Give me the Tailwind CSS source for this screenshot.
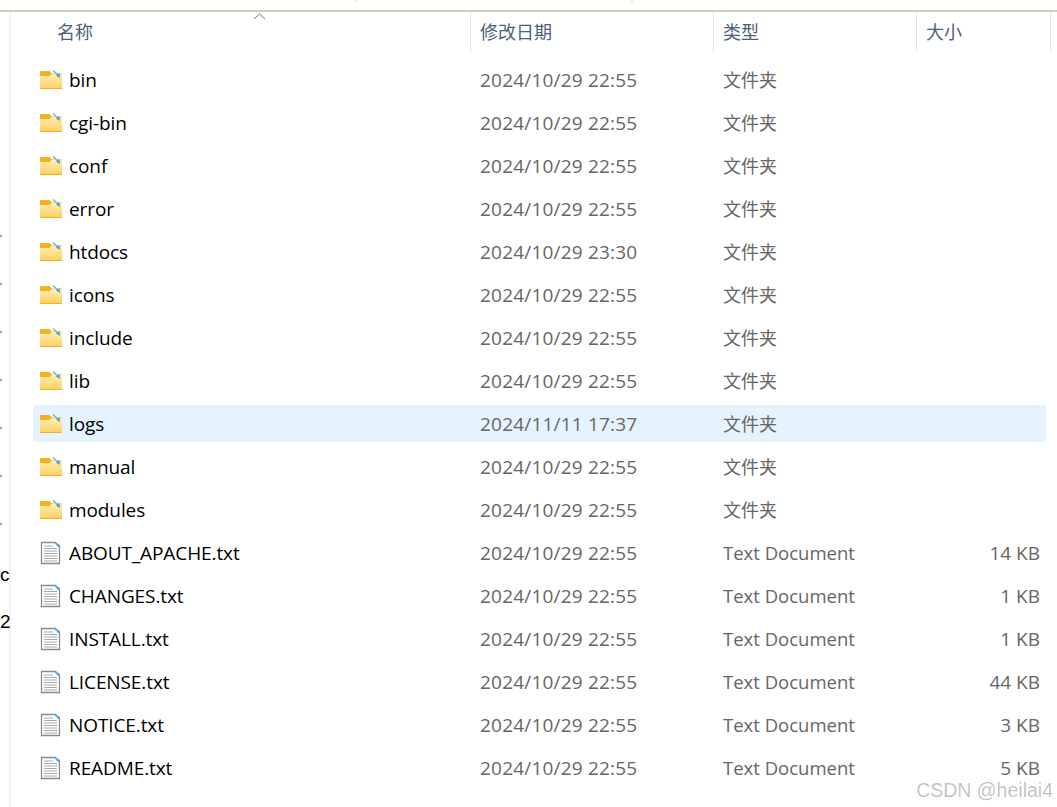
<!DOCTYPE html>
<html><head><meta charset="utf-8"><script src="https://cdn.jsdelivr.net/npm/@tailwindcss/browser@4"></script></head>
<body class="bg-white">
<div class="relative w-[1057px] h-[807px] overflow-hidden bg-white text-[19px] font-['Open_Sans','Noto_Sans_CJK_SC',sans-serif]">
<svg width="0" height="0" class="absolute">
<defs>
<linearGradient id="f" x1="0" y1="0" x2="0" y2="1"><stop offset="0" stop-color="#ffeeb4"/><stop offset="1" stop-color="#fdd164"/></linearGradient>
<symbol id="folder" viewBox="0 0 24 20"><path d="M1 2a1 1 0 0 1 1-1h8.500l2.500 2.500H23V19H1z" fill="#f5b21c"/><path d="M1 6h9.500l2-2H23V18H1z" fill="url(#f)"/><path d="M14 .5l6 5.500" stroke="#63b0dc" stroke-width="1.200"/><path d="M17 5.500l4 2.500-.5-5z" fill="#4a9fd8"/></symbol>
<symbol id="doc" viewBox="0 0 24 24"><path d="M2.500 1.500h14l4 4v17h-18z" fill="#fff" stroke="#8a8a8a" stroke-width="1.300"/><path d="M5 5h9M5 7.500h13M5 10h13M5 12.500h13M5 15h13M5 17.500h13M5 20h13" stroke="#a8a8a8"/><path d="M15 1l5 4.500" stroke="#63b0dc" stroke-width="1.200"/><path d="M17.500 5l3.500 1-1-3.500z" fill="#4a9fd8"/></symbol>
</defs></svg>
<div class="h-[10px]"></div>
<div class="h-[2px] bg-[#d2cfb8]"></div>
<div class="flex">
<aside class="w-[9px] shrink-0"></aside>
<div class="w-[2px] shrink-0 bg-[#f3f3f3] h-[795px]"></div>
<main class="flex-1 min-w-0">
<div class="relative flex h-[40px] text-[#4c607a] text-[18px]">
<svg class="absolute left-[242px] top-[1px]" width="13" height="7" viewBox="0 0 13 7"><path d="M1 6l5.500-5L12 6" fill="none" stroke="#777" stroke-width="1"/></svg>
<div class="w-[459px] pl-[46px] pt-[7px]">名称</div>
<div class="w-[243px] border-l border-[#e5e5e5] pl-[9px] pt-[7px]">修改日期</div>
<div class="w-[203px] border-l border-[#e5e5e5] pl-[9px] pt-[7px]">类型</div>
<div class="w-[135px] border-l border-r border-[#e5e5e5] pl-[9px] pt-[7px]">大小</div>
</div>
<div class="pl-[22px] pt-[9px] w-[1035px] flex flex-col gap-[6px] [&_span]:leading-[26px]">
<div class="flex items-center h-[37px] rounded-[3px]"><svg class="w-[24px] h-[20px] ml-[6px] shrink-0"><use href="#folder"/></svg><span class="w-[417px] pl-[6px] text-black tracking-[-0.1px]">bin</span><span class="w-[243px] text-[#666] tracking-[0.2px]">2024/10/29 22:55</span><span class="text-[#666] text-[18px]">文件夹</span></div>
<div class="flex items-center h-[37px] rounded-[3px]"><svg class="w-[24px] h-[20px] ml-[6px] shrink-0"><use href="#folder"/></svg><span class="w-[417px] pl-[6px] text-black tracking-[-0.1px]">cgi-bin</span><span class="w-[243px] text-[#666] tracking-[0.2px]">2024/10/29 22:55</span><span class="text-[#666] text-[18px]">文件夹</span></div>
<div class="flex items-center h-[37px] rounded-[3px]"><svg class="w-[24px] h-[20px] ml-[6px] shrink-0"><use href="#folder"/></svg><span class="w-[417px] pl-[6px] text-black tracking-[-0.1px]">conf</span><span class="w-[243px] text-[#666] tracking-[0.2px]">2024/10/29 22:55</span><span class="text-[#666] text-[18px]">文件夹</span></div>
<div class="flex items-center h-[37px] rounded-[3px]"><svg class="w-[24px] h-[20px] ml-[6px] shrink-0"><use href="#folder"/></svg><span class="w-[417px] pl-[6px] text-black tracking-[-0.1px]">error</span><span class="w-[243px] text-[#666] tracking-[0.2px]">2024/10/29 22:55</span><span class="text-[#666] text-[18px]">文件夹</span></div>
<div class="flex items-center h-[37px] rounded-[3px]"><svg class="w-[24px] h-[20px] ml-[6px] shrink-0"><use href="#folder"/></svg><span class="w-[417px] pl-[6px] text-black tracking-[-0.1px]">htdocs</span><span class="w-[243px] text-[#666] tracking-[0.2px]">2024/10/29 23:30</span><span class="text-[#666] text-[18px]">文件夹</span></div>
<div class="flex items-center h-[37px] rounded-[3px]"><svg class="w-[24px] h-[20px] ml-[6px] shrink-0"><use href="#folder"/></svg><span class="w-[417px] pl-[6px] text-black tracking-[-0.1px]">icons</span><span class="w-[243px] text-[#666] tracking-[0.2px]">2024/10/29 22:55</span><span class="text-[#666] text-[18px]">文件夹</span></div>
<div class="flex items-center h-[37px] rounded-[3px]"><svg class="w-[24px] h-[20px] ml-[6px] shrink-0"><use href="#folder"/></svg><span class="w-[417px] pl-[6px] text-black tracking-[-0.1px]">include</span><span class="w-[243px] text-[#666] tracking-[0.2px]">2024/10/29 22:55</span><span class="text-[#666] text-[18px]">文件夹</span></div>
<div class="flex items-center h-[37px] rounded-[3px]"><svg class="w-[24px] h-[20px] ml-[6px] shrink-0"><use href="#folder"/></svg><span class="w-[417px] pl-[6px] text-black tracking-[-0.1px]">lib</span><span class="w-[243px] text-[#666] tracking-[0.2px]">2024/10/29 22:55</span><span class="text-[#666] text-[18px]">文件夹</span></div>
<div class="flex items-center h-[37px] rounded-[3px] bg-[#e5f3ff]"><svg class="w-[24px] h-[20px] ml-[6px] shrink-0"><use href="#folder"/></svg><span class="w-[417px] pl-[6px] text-black tracking-[-0.1px]">logs</span><span class="w-[243px] text-[#666] tracking-[0.2px]">2024/11/11 17:37</span><span class="text-[#666] text-[18px]">文件夹</span></div>
<div class="flex items-center h-[37px] rounded-[3px]"><svg class="w-[24px] h-[20px] ml-[6px] shrink-0"><use href="#folder"/></svg><span class="w-[417px] pl-[6px] text-black tracking-[-0.1px]">manual</span><span class="w-[243px] text-[#666] tracking-[0.2px]">2024/10/29 22:55</span><span class="text-[#666] text-[18px]">文件夹</span></div>
<div class="flex items-center h-[37px] rounded-[3px]"><svg class="w-[24px] h-[20px] ml-[6px] shrink-0"><use href="#folder"/></svg><span class="w-[417px] pl-[6px] text-black tracking-[-0.1px]">modules</span><span class="w-[243px] text-[#666] tracking-[0.2px]">2024/10/29 22:55</span><span class="text-[#666] text-[18px]">文件夹</span></div>
<div class="flex items-center h-[37px]"><svg class="w-[24px] h-[24px] ml-[6px] shrink-0"><use href="#doc"/></svg><span class="w-[417px] pl-[6px] text-black tracking-[-0.1px]">ABOUT_APACHE.txt</span><span class="w-[243px] text-[#666] tracking-[0.2px]">2024/10/29 22:55</span><span class="w-[226px] text-[#666] text-[18.500px]">Text Document</span><span class="w-[91px] text-right text-[#666]">14 KB</span></div>
<div class="flex items-center h-[37px]"><svg class="w-[24px] h-[24px] ml-[6px] shrink-0"><use href="#doc"/></svg><span class="w-[417px] pl-[6px] text-black tracking-[-0.1px]">CHANGES.txt</span><span class="w-[243px] text-[#666] tracking-[0.2px]">2024/10/29 22:55</span><span class="w-[226px] text-[#666] text-[18.500px]">Text Document</span><span class="w-[91px] text-right text-[#666]">1 KB</span></div>
<div class="flex items-center h-[37px]"><svg class="w-[24px] h-[24px] ml-[6px] shrink-0"><use href="#doc"/></svg><span class="w-[417px] pl-[6px] text-black tracking-[-0.1px]">INSTALL.txt</span><span class="w-[243px] text-[#666] tracking-[0.2px]">2024/10/29 22:55</span><span class="w-[226px] text-[#666] text-[18.500px]">Text Document</span><span class="w-[91px] text-right text-[#666]">1 KB</span></div>
<div class="flex items-center h-[37px]"><svg class="w-[24px] h-[24px] ml-[6px] shrink-0"><use href="#doc"/></svg><span class="w-[417px] pl-[6px] text-black tracking-[-0.1px]">LICENSE.txt</span><span class="w-[243px] text-[#666] tracking-[0.2px]">2024/10/29 22:55</span><span class="w-[226px] text-[#666] text-[18.500px]">Text Document</span><span class="w-[91px] text-right text-[#666]">44 KB</span></div>
<div class="flex items-center h-[37px]"><svg class="w-[24px] h-[24px] ml-[6px] shrink-0"><use href="#doc"/></svg><span class="w-[417px] pl-[6px] text-black tracking-[-0.1px]">NOTICE.txt</span><span class="w-[243px] text-[#666] tracking-[0.2px]">2024/10/29 22:55</span><span class="w-[226px] text-[#666] text-[18.500px]">Text Document</span><span class="w-[91px] text-right text-[#666]">3 KB</span></div>
<div class="flex items-center h-[37px]"><svg class="w-[24px] h-[24px] ml-[6px] shrink-0"><use href="#doc"/></svg><span class="w-[417px] pl-[6px] text-black tracking-[-0.1px]">README.txt</span><span class="w-[243px] text-[#666] tracking-[0.2px]">2024/10/29 22:55</span><span class="w-[226px] text-[#666] text-[18.500px]">Text Document</span><span class="w-[91px] text-right text-[#666]">5 KB</span></div>
</div>
</main>
</div>
<span class="absolute right-[4px] top-[778px] text-[19.500px] text-black/25 font-['Liberation_Sans',sans-serif] leading-[24px]">CSDN @heilai4</span>
<span class="absolute left-[355px] top-0 w-[2px] h-[2px] bg-[#e8e8e8]"></span>
<span class="absolute left-[631px] top-0 w-[2px] h-[2px] bg-[#e8e8e8]"></span>
<span class="absolute left-0 top-[235px] w-[2px] h-[2px] bg-[#9aa5a5]"></span>
<span class="absolute left-0 top-[283px] w-[2px] h-[2px] bg-[#9aa5a5]"></span>
<span class="absolute left-0 top-[331px] w-[2px] h-[2px] bg-[#9aa5a5]"></span>
<span class="absolute left-0 top-[379px] w-[2px] h-[2px] bg-[#9aa5a5]"></span>
<span class="absolute left-0 top-[427px] w-[2px] h-[2px] bg-[#9aa5a5]"></span>
<span class="absolute left-0 top-[475px] w-[2px] h-[2px] bg-[#9aa5a5]"></span>
<span class="absolute left-0 top-[523px] w-[2px] h-[2px] bg-[#9aa5a5]"></span>
<span class="absolute left-0 top-[565px] text-[19px] leading-[20px] text-black font-['Liberation_Sans',sans-serif]">c</span>
<span class="absolute left-0 top-[612px] text-[19px] leading-[20px] text-black font-['Liberation_Sans',sans-serif]">2</span>
</div>
</body></html>
